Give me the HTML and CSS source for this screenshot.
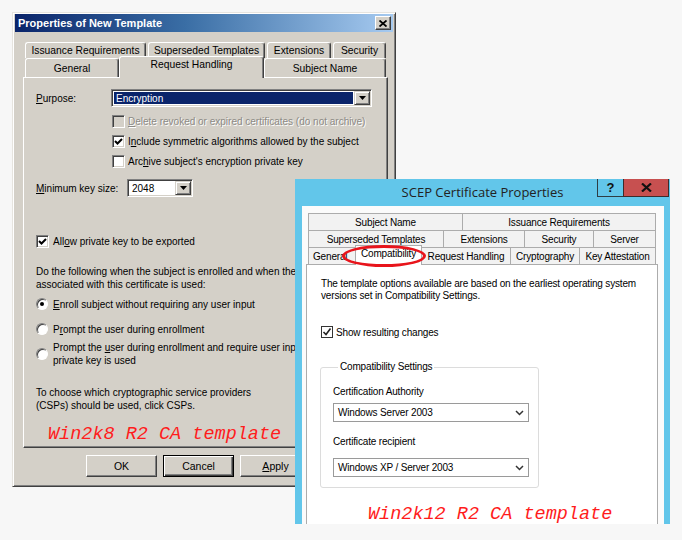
FILE: index.html
```html
<!DOCTYPE html>
<html>
<head>
<meta charset="utf-8">
<link rel="stylesheet" href="styles.css">
</head>
<body>
<section class="dlg-xp">
  <header class="xp-title">
    <span>Properties of New Template</span>
    <span class="xp-close"><svg width="8" height="7" viewBox="0 0 8 7"><path d="M0.5 0.5L7.5 6.5M7.5 0.5L0.5 6.5" stroke="#000" stroke-width="1.8"/></svg></span>
  </header>
  <div class="xp-body">
    <div class="xp-tabs">
      <div class="xp-row xp-row1">
        <div class="xp-tab">Issuance Requirements</div>
        <div class="xp-tab">Superseded Templates</div>
        <div class="xp-tab">Extensions</div>
        <div class="xp-tab">Security</div>
      </div>
      <div class="xp-row xp-row2">
        <div class="xp-tab">General</div>
        <div class="xp-tab xp-tab-on">Request Handling</div>
        <div class="xp-tab">Subject Name</div>
      </div>
    </div>
    <div class="xp-panel">
      <div class="xp-line xp-purpose">
        <span class="xp-label-purpose"><u>P</u>urpose:</span>
        <div class="xp-select xp-select-wide">
          <span class="xp-sel-hl">Encryption</span>
          <span class="xp-drop"><svg width="7" height="4" viewBox="0 0 7 4"><path d="M0 0H7L3.5 4Z" fill="#000"/></svg></span>
        </div>
      </div>
      <div class="xp-chk-row xp-indent xp-first-chk xp-disabled">
        <span class="xp-chk xp-chk-dis"></span><span><u>D</u>elete revoked or expired certificates (do not archive)</span>
      </div>
      <div class="xp-chk-row xp-indent">
        <span class="xp-chk"><svg width="9" height="9" viewBox="0 0 9 9"><path d="M1 4L3.5 6.5L8 2" fill="none" stroke="#000" stroke-width="2"/></svg></span><span>I<u>n</u>clude symmetric algorithms allowed by the subject</span>
      </div>
      <div class="xp-chk-row xp-indent">
        <span class="xp-chk"></span><span>Arc<u>h</u>ive subject's encryption private key</span>
      </div>
      <div class="xp-line xp-keysize">
        <span class="xp-label-key"><u>M</u>inimum key size:</span>
        <div class="xp-select xp-select-key">
          <span class="xp-sel-text">2048</span>
          <span class="xp-drop"><svg width="7" height="4" viewBox="0 0 7 4"><path d="M0 0H7L3.5 4Z" fill="#000"/></svg></span>
        </div>
      </div>
      <div class="xp-chk-row xp-allow">
        <span class="xp-chk"><svg width="9" height="9" viewBox="0 0 9 9"><path d="M1 4L3.5 6.5L8 2" fill="none" stroke="#000" stroke-width="2"/></svg></span><span>All<u>o</u>w private key to be exported</span>
      </div>
      <p class="xp-para xp-para-do">Do the following when the subject is enrolled and when the private key<br>associated with this certificate is used:</p>
      <div class="xp-radio-row xp-r1">
        <span class="xp-radio xp-radio-on"></span><span><u>E</u>nroll subject without requiring any user input</span>
      </div>
      <div class="xp-radio-row xp-r2">
        <span class="xp-radio"></span><span>P<u>r</u>ompt the user during enrollment</span>
      </div>
      <div class="xp-radio-row xp-r3">
        <span class="xp-radio"></span><span class="xp-two">Prompt the <u>u</u>ser during enrollment and require user input when the<br>private key is used</span>
      </div>
      <p class="xp-para xp-para-csp">To choose which cryptographic service providers<br>(CSPs) should be used, click CSPs.</p>
      <p class="note note-left">Win2k8 R2 CA template</p>
    </div>
    <div class="xp-buttons">
      <span class="xp-btn">OK</span>
      <span class="xp-btn xp-btn-def">Cancel</span>
      <span class="xp-btn"><u>A</u>pply</span>
    </div>
  </div>
</section>

<section class="dlg-w8">
  <header class="w8-title">
    <span class="w8-title-text">SCEP Certificate Properties</span>
    <span class="w8-ctrls">
      <span class="w8-help">?</span>
      <span class="w8-close"><svg width="11" height="9" viewBox="0 0 11 9"><path d="M1 0.5L10 8.5M10 0.5L1 8.5" stroke="#111" stroke-width="2.2"/></svg></span>
    </span>
  </header>
  <div class="w8-client">
    <div class="w8-tabs">
      <div class="w8-row w8-row1">
        <div class="w8-tab">Subject Name</div>
        <div class="w8-tab">Issuance Requirements</div>
      </div>
      <div class="w8-row w8-row2">
        <div class="w8-tab">Superseded Templates</div>
        <div class="w8-tab">Extensions</div>
        <div class="w8-tab">Security</div>
        <div class="w8-tab">Server</div>
      </div>
      <div class="w8-row w8-row3">
        <div class="w8-tab w8-tab-left">General</div>
        <div class="w8-tab w8-tab-on">Compatibility<span class="ring"></span></div>
        <div class="w8-tab">Request Handling</div>
        <div class="w8-tab">Cryptography</div>
        <div class="w8-tab">Key Attestation</div>
      </div>
    </div>
    <div class="w8-panel">
      <p class="w8-para">The template options available are based on the earliest operating system<br>versions set in Compatibility Settings.</p>
      <div class="w8-chk-row">
        <span class="w8-chk"><svg width="10" height="10" viewBox="0 0 10 10"><path d="M1.5 5L4 7.5L8.5 1.5" fill="none" stroke="#222" stroke-width="1.6"/></svg></span><span>Show resulting changes</span>
      </div>
      <fieldset class="w8-group">
        <legend>Compatibility Settings</legend>
        <div class="w8-label w8-label-ca">Certification Authority</div>
        <div class="w8-select"><span>Windows Server 2003</span><svg width="9" height="6" viewBox="0 0 9 6"><path d="M1 1L4.5 4.5L8 1" fill="none" stroke="#333" stroke-width="1.5"/></svg></div>
        <div class="w8-label w8-label-rc">Certificate recipient</div>
        <div class="w8-select"><span>Windows XP / Server 2003</span><svg width="9" height="6" viewBox="0 0 9 6"><path d="M1 1L4.5 4.5L8 1" fill="none" stroke="#333" stroke-width="1.5"/></svg></div>
      </fieldset>
      <p class="note note-right">Win2k12 R2 CA template</p>
    </div>
  </div>
</section>
</body>
</html>
```

FILE: styles.css
```css
* { box-sizing: border-box; margin: 0; padding: 0; }
html, body { width: 682px; height: 540px; }
body {
  background: #f7f7f7;
  position: relative;
  overflow: hidden;
  font-family: "Liberation Sans", Arial, sans-serif;
  color: #000;
}

/* ---------- classic XP dialog ---------- */
.dlg-xp {
  position: absolute;
  left: 12px;
  top: 12px;
  width: 384px;
  height: 475px;
  background: #d4d0c8;
  border: 1px solid;
  border-color: #e6e4df #404040 #404040 #e6e4df;
  box-shadow: inset 1px 1px #fff, inset -1px -1px #808080;
  padding: 1px 2px;
  font-size: 10px;
  display: flex;
  flex-direction: column;
}
.xp-title {
  height: 18px;
  background: linear-gradient(90deg, #0a246a 0%, #3a6ea5 45%, #a6caf0 100%);
  display: flex;
  align-items: center;
  justify-content: space-between;
  padding: 0 2px 0 3px;
  color: #fff;
  font-weight: bold;
  font-size: 11px;
}
.xp-close {
  width: 16px;
  height: 14px;
  background: #d4d0c8;
  border: 1px solid;
  border-color: #fff #404040 #404040 #fff;
  box-shadow: inset -1px -1px #808080;
  display: flex;
  align-items: center;
  justify-content: center;
}
.xp-body { padding: 10px 0 0 8px; display: flex; flex-direction: column; }
.xp-tabs { padding-left: 2px; display: flex; flex-direction: column; }
.xp-row { display: grid; }
.xp-row1 { grid-template-columns: 121px 117px 64px 53px; column-gap: 2px; height: 16px; }
.xp-row2 { grid-template-columns: 94px 145px 122px; height: 19px; }
.xp-tab {
  border: 1px solid;
  border-bottom: 0;
  border-color: #fff #404040 #404040 #fff;
  box-shadow: inset -1px 0 #808080;
  border-radius: 3px 3px 0 0;
  background: #d4d0c8;
  display: flex;
  align-items: center;
  justify-content: center;
  white-space: nowrap;
  line-height: 14px;
  font-size: 10.3px;
  padding-top: 1px;
}
.xp-row2 .xp-tab { padding-top: 1px; }
.xp-tab-on {
  position: relative;
  z-index: 1;
  margin-top: -2px;
  height: 22px;
  align-items: flex-start;
  padding-top: 3px;
}
.xp-panel {
  width: 365px;
  height: 371px;
  border: 1px solid;
  border-color: #fff #404040 #404040 #fff;
  box-shadow: inset -1px -1px #808080;
  padding: 11px 0 0 12px;
  display: flex;
  flex-direction: column;
}
.xp-line { display: flex; align-items: center; height: 18px; }
.xp-label-purpose { width: 75px; }
.xp-label-key { width: 91px; }
.xp-keysize { margin-top: 8px; }
.xp-select {
  height: 18px;
  background: #fff;
  border: 1px solid;
  border-color: #808080 #fff #fff #808080;
  box-shadow: inset 1px 1px #404040, inset -1px -1px #d4d0c8;
  display: flex;
  align-items: stretch;
  padding: 2px;
}
.xp-select-wide { width: 261px; }
.xp-select-key { width: 66px; }
.xp-sel-hl {
  flex: 1;
  background: #0a246a;
  color: #fff;
  padding-left: 2px;
  line-height: 13px;
  margin-right: 1px;
}
.xp-sel-text { flex: 1; padding-left: 2px; line-height: 13px; }
.xp-drop {
  width: 16px;
  margin: -1px -1px -1px 0;
  background: #d4d0c8;
  border: 1px solid;
  border-color: #d4d0c8 #404040 #404040 #d4d0c8;
  box-shadow: inset 1px 1px #fff, inset -1px -1px #808080;
  display: flex;
  align-items: center;
  justify-content: center;
}
.xp-chk-row, .xp-radio-row { display: flex; align-items: center; height: 20px; white-space: nowrap; }
.xp-indent { margin-left: 76px; gap: 3px; }
.xp-first-chk { margin-top: 4px; }
.xp-disabled { color: #8c8a85; text-shadow: 1px 1px 0 #fff; }
.xp-chk {
  width: 13px;
  height: 13px;
  flex: none;
  background: #fff;
  border: 1px solid;
  border-color: #808080 #fff #fff #808080;
  box-shadow: inset 1px 1px #404040, inset -1px -1px #d4d0c8;
  display: flex;
  align-items: center;
  justify-content: center;
}
.xp-chk-dis { background: #d4d0c8; }
.xp-allow { margin-top: 34px; gap: 4px; }
.xp-para { line-height: 13px; white-space: nowrap; }
.xp-para-do { margin-top: 14px; }
.xp-radio-row { gap: 5px; }
.xp-r1 { margin-top: 3px; }
.xp-r2 { margin-top: 5px; }
.xp-r3 { margin-top: 2px; height: 26px; }
.xp-two { line-height: 13px; }
.xp-radio {
  width: 12px;
  height: 12px;
  flex: none;
  border-radius: 50%;
  background: #fff;
  border: 1px solid;
  border-color: #808080 #fff #fff #808080;
  box-shadow: inset 1px 1px #404040;
  display: flex;
  align-items: center;
  justify-content: center;
}
.xp-radio-on::after {
  content: "";
  width: 4px;
  height: 4px;
  border-radius: 50%;
  background: #000;
}
.xp-para-csp { margin-top: 19px; }
.note {
  font-family: "Liberation Mono", "Courier New", monospace;
  font-style: italic;
  font-size: 18.5px;
  line-height: 20px;
  color: #ff1c1c;
  white-space: nowrap;
  letter-spacing: 0;
}
.note-left { margin: 13px 0 0 12px; }
.xp-buttons { display: flex; gap: 6px; margin: 7px 0 0 63px; }
.xp-btn {
  width: 71px;
  height: 22px;
  border: 1px solid;
  border-color: #fff #404040 #404040 #fff;
  box-shadow: inset -1px -1px #808080;
  display: flex;
  align-items: center;
  justify-content: center;
  font-size: 10.5px;
}
.xp-btn-def {
  border: 1px solid #000;
  box-shadow: inset 1px 1px #fff, inset -1px -1px #404040, inset -2px -2px #808080;
}

/* ---------- Windows 8 dialog ---------- */
.dlg-w8 {
  position: absolute;
  left: 295px;
  top: 179px;
  width: 375px;
  height: 345px;
  background: #62c6ea;
  padding: 0 6px 0 7px;
  display: flex;
  flex-direction: column;
  overflow: hidden;
  font-size: 10px;
  letter-spacing: -0.17px;
}
.w8-title {
  height: 27px;
  margin: 0 -6px 0 -7px;
  display: grid;
  grid-template-columns: 1fr auto 1fr;
}
.w8-title-text {
  grid-column: 2;
  font-family: "Open Sans", "Noto Sans", sans-serif;
  font-size: 13px;
  letter-spacing: 0;
  color: #222;
  line-height: 26px;
}
.w8-ctrls { grid-column: 3; justify-self: end; display: flex; margin-right: 1px; height: 18px; }
.w8-help {
  width: 26px;
  border: 1px solid #2e3d44;
  border-top: 0;
  border-right: 0;
  font-weight: bold;
  font-size: 13px;
  color: #111;
  display: flex;
  align-items: center;
  justify-content: center;
  line-height: 1;
}
.w8-close {
  width: 46px;
  background: #c75050;
  border: 1px solid #3d2b2b;
  border-top: 0;
  display: flex;
  align-items: center;
  justify-content: center;
}
.w8-client {
  flex: 1;
  background: #fbfbfb;
  padding: 7px 6px 0 4px;
  display: flex;
  flex-direction: column;
}
.w8-tabs { margin: 0 2px; display: flex; flex-direction: column; }
.w8-row { display: grid; height: 17px; }
.w8-row1 { grid-template-columns: 154px 194px; }
.w8-row2 { grid-template-columns: 135px 81px 69px 63px; }
.w8-row3 { grid-template-columns: 47px 66px 89px 69px 77px; }
.w8-tab {
  border-top: 1px solid #acacac;
  border-left: 1px solid #acacac;
  background: #f2f2f2;
  display: flex;
  align-items: center;
  justify-content: center;
  white-space: nowrap;
  overflow: hidden;
}
.w8-tab:last-child { border-right: 1px solid #acacac; }
.w8-tab-left { justify-content: flex-start; padding-left: 4px; }
.w8-tab-on {
  position: relative;
  z-index: 1;
  overflow: visible;
  background: #fff;
  border-right: 1px solid #acacac;
  margin: -2px -1px -1px 0;
  height: 20px;
  align-items: flex-start;
  padding-top: 2px;
}
.ring {
  position: absolute;
  left: -14px;
  top: -1px;
  width: 84px;
  height: 22px;
  border: 3px solid #e8141b;
  border-radius: 50%;
}
.w8-panel {
  flex: 1;
  background: #fff;
  border: 1px solid #acacac;
  border-bottom: 0;
  padding: 13px 0 0 14px;
  display: flex;
  flex-direction: column;
  align-items: flex-start;
}
.w8-para { line-height: 12px; white-space: nowrap; }
.w8-chk-row { margin-top: 23px; height: 14px; display: flex; align-items: center; gap: 3px; }
.w8-chk {
  width: 12px;
  height: 12px;
  border: 1px solid #333;
  background: #fff;
  display: flex;
  align-items: center;
  justify-content: center;
}
.w8-group {
  margin: 21px 0 0 -1px;
  width: 219px;
  border: 1px solid #dcdcdc;
  border-radius: 3px;
  padding: 0 9px 10px 12px;
}
.w8-group legend {
  margin-left: 5px;
  padding: 0 2px;
  line-height: 14px;
}
.w8-label { line-height: 14px; }
.w8-label-ca { margin-top: 11px; }
.w8-label-rc { margin-top: 13px; }
.w8-select {
  margin-top: 4px;
  width: 196px;
  height: 19px;
  border: 1px solid #9a9a9a;
  background: #fff;
  display: flex;
  align-items: center;
  justify-content: space-between;
  padding: 0 4px 0 4px;
}
.w8-label-rc + .w8-select { margin-top: 9px; }
.note-right { margin: 18px 0 0 47px; line-height: 18px; }
```
